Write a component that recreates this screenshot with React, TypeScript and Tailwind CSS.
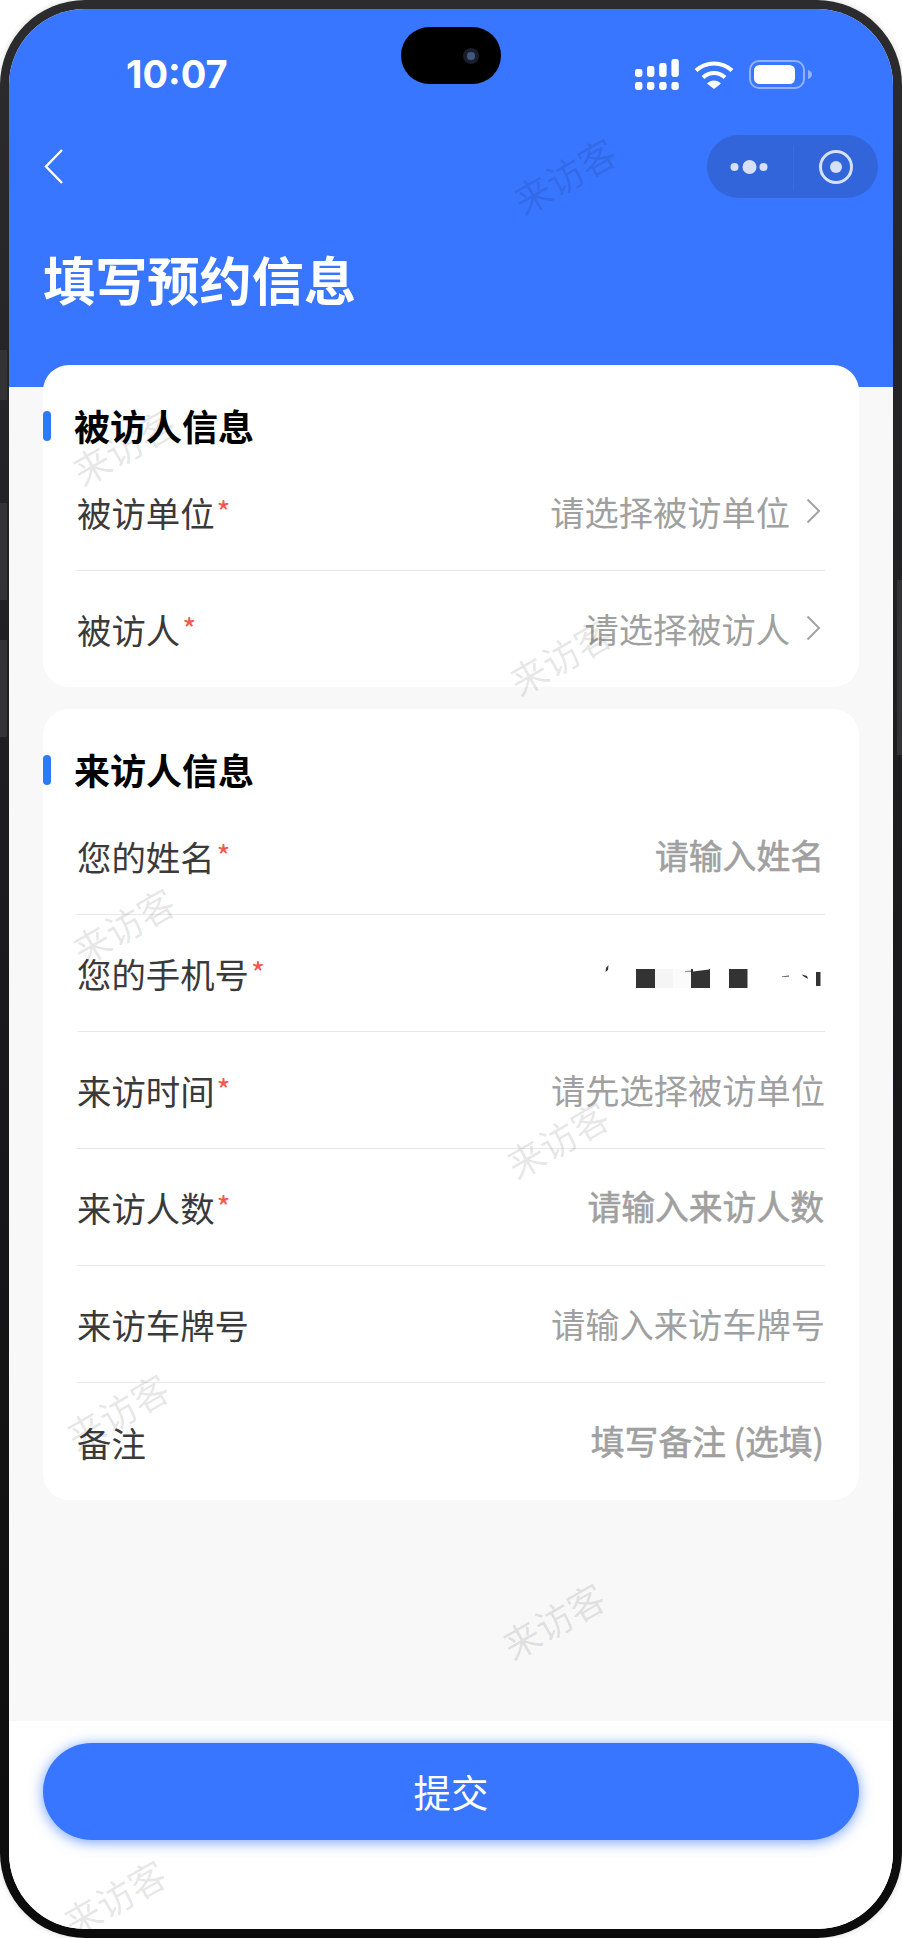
const watermarks = [
  'left-[499px] top-[141px]',
  'left-[58px] top-[412px]',
  'left-[495px] top-[622px]',
  'left-[58px] top-[891px]',
  'left-[492px] top-[1105px]',
  'left-[52px] top-[1377px]',
  'left-[488px] top-[1586px]',
  'left-[49px] top-[1863px]',
]

function StatusIcons() {
  return (
    <div className="flex items-center gap-[15px]">
      <svg width="44" height="31" viewBox="0 0 44 31" fill="#fff">
        <rect x="0" y="10" width="7.4" height="8" rx="2.4" />
        <rect x="12" y="7" width="7.4" height="11" rx="2.4" />
        <rect x="24.2" y="4" width="7.4" height="14" rx="2.4" />
        <rect x="36.4" y="0" width="7.4" height="18" rx="2.4" />
        <rect x="0" y="23" width="7.4" height="8" rx="2.4" />
        <rect x="12" y="23" width="7.4" height="8" rx="2.4" />
        <rect x="24.2" y="23" width="7.4" height="8" rx="2.4" />
        <rect x="36.4" y="23" width="7.4" height="8" rx="2.4" />
      </svg>
      <svg width="40" height="29" viewBox="0 0 40 29" fill="none" stroke="#fff" strokeWidth="4">
        <path d="M2 10.5C12 1 28 1 38 10.5" />
        <path d="M9 17.5C15.5 11.5 24.5 11.5 31 17.5" />
        <path d="M13 23.4C17 19.4 23 19.4 27 23.4L20 29Z" fill="#fff" stroke="none" />
      </svg>
      <svg width="63" height="29" viewBox="0 0 63 29" fill="none">
        <rect x="1" y="1" width="54" height="27" rx="9" stroke="#fff" strokeOpacity="0.45" strokeWidth="2" />
        <rect x="5" y="5" width="41" height="19" rx="5.5" fill="#fff" />
        <path d="M59 10C61.5 10.5 63 12.5 63 14.5C63 16.5 61.5 18.5 59 19Z" fill="#fff" fillOpacity="0.45" />
      </svg>
    </div>
  )
}

function Capsule() {
  return (
    <div className="flex h-[63px] w-[171px] items-center rounded-full bg-[#3265d9]">
      <div className="flex w-[86px] items-center justify-center">
        <svg width="40" height="16" viewBox="0 0 40 16" fill="#fff" fillOpacity="0.8">
          <circle cx="4.5" cy="8" r="4" />
          <circle cx="19.5" cy="8" r="7" />
          <circle cx="33.5" cy="8" r="4" />
        </svg>
      </div>
      <div className="h-[44px] w-px bg-[#3a6de0]" />
      <div className="flex flex-1 items-center pl-[24px]">
        <svg width="36" height="36" viewBox="0 0 36 36" fill="none">
          <circle cx="18" cy="18" r="15.5" stroke="#fff" strokeOpacity="0.8" strokeWidth="3" />
          <circle cx="18" cy="18" r="6" fill="#fff" fillOpacity="0.8" />
        </svg>
      </div>
    </div>
  )
}

function Chevron() {
  return (
    <svg width="15" height="26" viewBox="0 0 15 26" fill="none" stroke="#a3a3a3" strokeWidth="2" className="ml-[16px] mr-[4px]">
      <path d="M1.5 1.5L13 13L1.5 24.5" />
    </svg>
  )
}

// the phone number is blacked out in the screenshot
function PhoneMask() {
  return (
    <svg width="250" height="40" viewBox="0 0 250 40" className="mr-[4px]">
      <path d="M35 15L37.5 12L37 17L34.5 19Z" fill="#333" />
      <rect x="65" y="16" width="19" height="19" fill="#333" />
      <rect x="84" y="16" width="18" height="19" fill="#f5f5f5" />
      <rect x="102" y="16" width="18" height="19" fill="#fbfbfb" />
      <rect x="120" y="16" width="19" height="19" fill="#333" />
      <path d="M114 18L130 17.5L130 18.5L114 18.6Z" fill="#333" />
      <path d="M122 18.6L138 16.5V15.5L122 15.5Z" fill="#fff" />
      <rect x="158" y="16" width="18.5" height="19" fill="#333" />
      <path d="M211 23.5L218 22.5L218 23.5L211 24Z" fill="#333" />
      <path d="M231 21.5L236 23L237 26L232 23Z" fill="#333" />
      <rect x="245" y="19" width="4.5" height="14" fill="#333" />
    </svg>
  )
}

function Row({ label, required, placeholder, medium, chevron, last, phone, short }: {
  label: string
  required?: boolean
  placeholder?: string
  medium?: boolean
  chevron?: boolean
  last?: boolean
  phone?: boolean
  short?: boolean
}) {
  return (
    <div className={`mx-[34px] flex items-center justify-between ${short ? 'h-[116px]' : 'h-[117px]'} ${last ? '' : 'border-b border-[#e8e8e8]'}`}>
      <div className="flex items-center text-[34.4px] leading-[50px] text-[#3a3a3a]">
        {label}
        {required && <span className="ml-[2px] mt-[-2px] text-[30px] leading-none text-[#f5574f]">*</span>}
      </div>
      {phone ? (
        <PhoneMask />
      ) : (
        <div className={`mb-[2px] flex items-center leading-[50px] text-[#a0a0a0] ${medium ? 'mr-[1px] text-[33.8px] [-webkit-text-stroke:0.6px_#a0a0a0]' : 'text-[34.25px]'}`}>
          {placeholder}
          {chevron && <Chevron />}
        </div>
      )}
    </div>
  )
}

function SectionTitle({ title }: { title: string }) {
  return (
    <div className="flex h-[89px] items-center gap-[23px] pt-[31px]">
      <div className="h-[30px] w-[8px] translate-y-[1px] rounded-full bg-[#2b7bf6]" />
      <div className="text-[36px] font-bold leading-[54px] text-black">{title}</div>
    </div>
  )
}

export default function App() {
  return (
    <div className="relative h-[1938px] w-[902px] overflow-hidden bg-white font-['Noto_Sans_CJK_SC',sans-serif]">
      <div className="relative h-full rounded-[85px] bg-gradient-to-b from-[#2c2c2e] via-[#1a1a1c] to-[#0c0c0c] p-[9px] shadow-[0_0_6px_rgba(0,0,0,0.15)]">
        <div className="absolute left-0 top-[503px] h-[97px] w-[7px] bg-[#333335]" />
        <div className="absolute left-0 top-[640px] h-[97px] w-[7px] bg-[#333335]" />
        <div className="absolute left-0 top-[350px] h-[50px] w-[7px] bg-[#333335]" />
        <div className="absolute right-0 top-[580px] h-[175px] w-[5px] bg-[#333335]" />

        <div className="relative flex h-full flex-col overflow-hidden rounded-[76px] bg-[#f8f8f8]">
          <div className="h-[378px] shrink-0 bg-[#3876ff]">
            <div className="mt-[38px] flex h-[54px] items-center justify-between pl-[117px] pr-[81px]">
              <div className="font-['Inter',sans-serif] text-[38px] font-bold leading-none text-white">10:07</div>
              <StatusIcons />
            </div>
            <div className="mt-[34px] flex items-center justify-between pl-[35px] pr-[15px]">
              <svg width="20" height="35" viewBox="0 0 20 35" fill="none" stroke="#fff" strokeWidth="2.4">
                <path d="M18 1L2 17.5L18 34" />
              </svg>
              <Capsule />
            </div>
            <div className="mt-[44px] pl-[34px] text-[52.2px] font-semibold leading-[72px] text-white">填写预约信息</div>
          </div>

          <div className="mt-[-22px] flex flex-col gap-[22px] px-[34px]">
            <div className="rounded-[26px] bg-white">
              <SectionTitle title="被访人信息" />
              <Row label="被访单位" required placeholder="请选择被访单位" chevron />
              <Row label="被访人" required placeholder="请选择被访人" chevron last short />
            </div>
            <div className="rounded-[26px] bg-white">
              <SectionTitle title="来访人信息" />
              <Row label="您的姓名" required placeholder="请输入姓名" medium />
              <Row label="您的手机号" required phone />
              <Row label="来访时间" required placeholder="请先选择被访单位" />
              <Row label="来访人数" required placeholder="请输入来访人数" medium />
              <Row label="来访车牌号" placeholder="请输入来访车牌号" />
              <Row label="备注" placeholder="填写备注 (选填)" medium last />
            </div>
          </div>

          <div className="mt-auto h-[208px] shrink-0 bg-white px-[34px] pt-[22px]">
            <button className="flex h-[97px] w-full items-center justify-center rounded-full bg-[#3876ff] text-[37.5px] text-white shadow-[0_2px_14px_rgba(56,118,255,0.7)]">
              提交
            </button>
          </div>

          {watermarks.map((pos) => (
            <div
              key={pos}
              className={`pointer-events-none absolute w-[112px] -rotate-30 text-center text-[37px] leading-[50px] text-black/10 whitespace-nowrap ${pos}`}
            >
              来访客
            </div>
          ))}

          <div className="absolute left-[392px] top-[18px] flex h-[57px] w-[100px] items-center justify-end rounded-full bg-black pr-[22px]">
            <div className="flex h-[16px] w-[16px] items-center justify-center rounded-full bg-[#1a1d2a]">
              <div className="h-[8px] w-[8px] rounded-full bg-[#41597f]" />
            </div>
          </div>
        </div>
      </div>
    </div>
  )
}
